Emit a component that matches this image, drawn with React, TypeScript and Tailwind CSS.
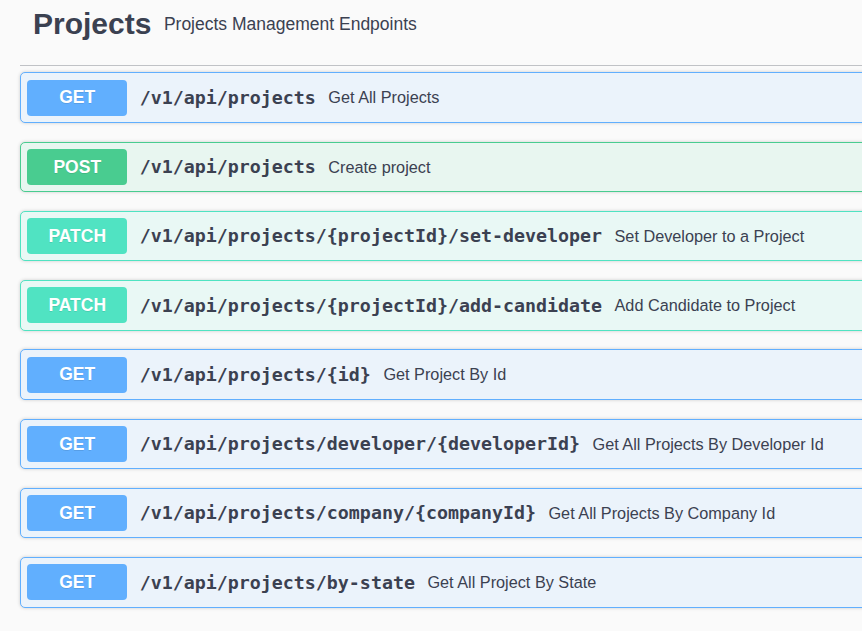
import React from 'react';

type Method = 'GET' | 'POST' | 'PATCH';

const endpoints: { method: Method; path: string; summary: string }[] = [
  { method: 'GET', path: '/v1/api/projects', summary: 'Get All Projects' },
  { method: 'POST', path: '/v1/api/projects', summary: 'Create project' },
  { method: 'PATCH', path: '/v1/api/projects/{projectId}/set-developer', summary: 'Set Developer to a Project' },
  { method: 'PATCH', path: '/v1/api/projects/{projectId}/add-candidate', summary: 'Add Candidate to Project' },
  { method: 'GET', path: '/v1/api/projects/{id}', summary: 'Get Project By Id' },
  { method: 'GET', path: '/v1/api/projects/developer/{developerId}', summary: 'Get All Projects By Developer Id' },
  { method: 'GET', path: '/v1/api/projects/company/{companyId}', summary: 'Get All Projects By Company Id' },
  { method: 'GET', path: '/v1/api/projects/by-state', summary: 'Get All Project By State' },
];

const styles: Record<Method, { block: string; badge: string }> = {
  GET: { block: 'bg-[#ebf3fb] border-[#61affe]', badge: 'bg-[#61affe]' },
  POST: { block: 'bg-[#e8f6f0] border-[#49cc90]', badge: 'bg-[#49cc90]' },
  PATCH: { block: 'bg-[#e9f8f5] border-[#50e3c2]', badge: 'bg-[#50e3c2]' },
};

function OpBlock({ method, path, summary }: { method: Method; path: string; summary: string }) {
  const s = styles[method];
  return (
    <div className={`mb-[18.75px] border rounded-[5px] shadow-[0_0_3.75px_rgba(0,0,0,0.19)] ${s.block}`}>
      <div className="flex items-center p-[6.25px]">
        <div
          className={`w-[100px] h-[36px] flex items-center justify-center rounded-[4px] text-white font-bold text-[17.5px] [text-shadow:0_1px_0_rgba(0,0,0,0.1)] ${s.badge}`}
          style={{ fontFamily: '"Liberation Sans", Arial, sans-serif' }}
        >
          {method}
        </div>
        <span
          className="px-[12.5px] text-[18.3px] font-bold text-[#3b4151]"
          style={{ fontFamily: '"DejaVu Sans Mono", monospace' }}
        >
          {path}
        </span>
        <span
          className="text-[16.25px] text-[#3b4151]"
          style={{ fontFamily: '"Liberation Sans", Arial, sans-serif' }}
        >
          {summary}
        </span>
      </div>
    </div>
  );
}

export default function App() {
  return (
    <div className="w-[862px] h-[631px] overflow-hidden bg-[#fafafa]">
      <div className="w-[1100px] pl-[20px]">
        <div
          className="flex items-center pl-[13px] pt-[7px] pb-[23.5px] mb-[6.25px] border-b border-[rgba(59,65,81,0.3)] text-[#3b4151]"
          style={{ fontFamily: '"Liberation Sans", Arial, sans-serif' }}
        >
          <span className="text-[30px] font-bold leading-[34.5px]">Projects</span>
          <span className="ml-[12.5px] text-[17.5px] leading-[20px]">Projects Management Endpoints</span>
        </div>
        {endpoints.map((e, i) => (
          <OpBlock key={i} {...e} />
        ))}
      </div>
    </div>
  );
}
